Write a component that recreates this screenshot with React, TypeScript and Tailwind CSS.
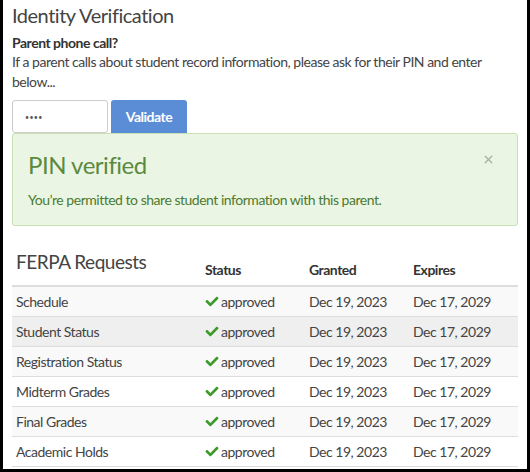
import { FaCheck } from "react-icons/fa";
import { X } from "lucide-react";

interface FerpaRow {
  label: string;
  granted: string;
  expires: string;
  bg: string;
}

const rows: FerpaRow[] = [
  { label: "Schedule", granted: "Dec 19, 2023", expires: "Dec 17, 2029", bg: "bg-[#f9f9f9]" },
  { label: "Student Status", granted: "Dec 19, 2023", expires: "Dec 17, 2029", bg: "bg-[#efefef]" },
  { label: "Registration Status", granted: "Dec 19, 2023", expires: "Dec 17, 2029", bg: "bg-[#f9f9f9]" },
  { label: "Midterm Grades", granted: "Dec 19, 2023", expires: "Dec 17, 2029", bg: "bg-white" },
  { label: "Final Grades", granted: "Dec 19, 2023", expires: "Dec 17, 2029", bg: "bg-[#f9f9f9]" },
  { label: "Academic Holds", granted: "Dec 19, 2023", expires: "Dec 17, 2029", bg: "bg-white" },
];

export default function App() {
  return (
    <div className="h-[472px] w-[530px] overflow-hidden border-x-[3px] border-b-[3px] border-black bg-white font-['Lato','Noto_Sans',sans-serif] tracking-[-0.03em] text-[#333]">
      <div className="px-[9px] pt-[2px]">
        <h2 className="text-[20px] leading-[26px] text-[#444]">Identity Verification</h2>
        <p className="mt-[6px] text-[14px] font-bold leading-[18px]">Parent phone call?</p>
        <p className="text-[14px] leading-[20px] text-[#444]">
          If a parent calls about student record information, please ask for their PIN and enter below...
        </p>

        <div className="mt-[8px] flex gap-[3px]">
          <input
            type="password"
            defaultValue="1234"
            className="h-[33px] w-[96px] rounded-[3px] border border-[#ccc] px-[12px] text-[7px] tracking-[0.05em] text-[#555] outline-none"
          />
          <button className="h-[33px] w-[76px] rounded-t-[3px] bg-[#5b8dd6] text-[14px] font-bold text-white">
            Validate
          </button>
        </div>

        <div className="relative h-[93px] rounded-[3px] border border-[#c7e0b4] bg-[#ebf5e3] px-[15px] pt-[16px] text-[#5b8a3f]">
          <X className="absolute right-[22px] top-[19px] h-[13px] w-[13px] text-[#a9b5a0]" strokeWidth={2.5} />
          <h3 className="text-[24px] leading-[30px]">PIN verified</h3>
          <p className="mt-[10px] text-[14px] leading-[20px] text-[#4c7a30]">
            You’re permitted to share student information with this parent.
          </p>
        </div>

        <table className="mt-[24px] w-full border-collapse text-[14px]">
          <thead>
            <tr className="border-b-2 border-[#ddd]">
              <th className="w-[189px] pb-[11px] pl-[4px] text-left align-top text-[19px] font-normal leading-[24px] text-[#444]">
                FERPA Requests
              </th>
              <th className="w-[104px] pb-[5px] pl-[4px] text-left align-bottom font-bold leading-[20px]">Status</th>
              <th className="w-[104px] pb-[5px] pl-[4px] text-left align-bottom font-bold leading-[20px]">Granted</th>
              <th className="pb-[5px] pl-[4px] text-left align-bottom font-bold leading-[20px]">Expires</th>
            </tr>
          </thead>
          <tbody className="text-[#444]">
            {rows.map((row) => (
              <tr key={row.label} className={`h-[30px] border-b border-[#ddd] ${row.bg}`}>
                <td className="pl-[4px]">{row.label}</td>
                <td className="pl-[4px]">
                  <span className="flex items-center gap-[2px]">
                    <FaCheck className="h-[13px] w-[14px] text-[#3c9a28]" />
                    approved
                  </span>
                </td>
                <td className="pl-[4px]">{row.granted}</td>
                <td className="pl-[4px]">{row.expires}</td>
              </tr>
            ))}
          </tbody>
        </table>
      </div>
    </div>
  );
}
